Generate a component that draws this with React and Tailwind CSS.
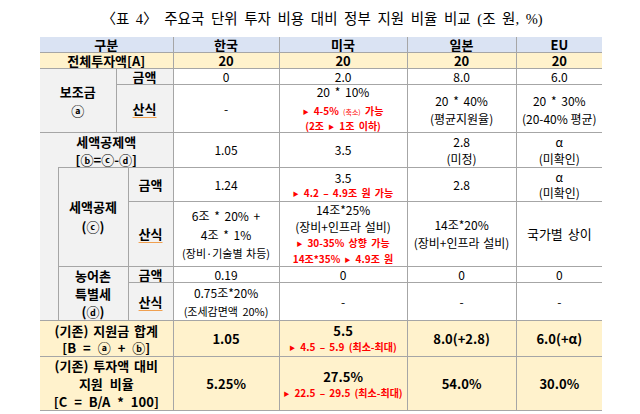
import React from 'react';

const cellBase = 'border border-[#a6a6a6] p-0 align-middle text-center';

// inner block with a fixed height so rows keep the reference pitch
const Box = ({ h, className = '', children }) => (
  <div className={`${h} flex flex-col items-center justify-center ${className}`}>{children}</div>
);

const Red = ({ children, className = '' }) => (
  <div className={`text-[10px] font-bold text-[#ff0000] leading-[13px] whitespace-nowrap ${className}`}>{children}</div>
);

const Tri = () => <span className="text-[6px] mr-[5px] align-[1px]">▶</span>;

const Label = ({ children, className = '' }) => (
  <div className={`text-[13px] font-bold whitespace-nowrap ${className}`}>{children}</div>
);

const Sansik = () => (
  <Label className="leading-[16px] underline decoration-[#f0a050] decoration-1 underline-offset-[3px]">산식</Label>
);

export default function App() {
  return (
    <div className="w-[640px] h-[414px] overflow-hidden bg-white text-black font-['Noto_Sans_CJK_KR',sans-serif]">
      <div className="h-[37px] flex items-center justify-center">
        <h1 className="text-[14.5px] leading-[20px] font-['Liberation_Serif','Noto_Sans_CJK_KR',serif] [word-spacing:3px] pl-[4px]">
          〈표 4〉 주요국 단위 투자 비용 대비 정부 지원 비율 비교 (조 원, %)
        </h1>
      </div>

      <table className="ml-[40px] w-[562px] table-fixed border-collapse text-[12px] [word-spacing:2px]">
        <colgroup>
          <col className="w-[18px]" />
          <col className="w-[58px]" />
          <col className="w-[12px]" />
          <col className="w-[45px]" />
          <col className="w-[106px]" />
          <col className="w-[128px]" />
          <col className="w-[109px]" />
          <col className="w-[86px]" />
        </colgroup>
        <tbody>
          {/* header */}
          <tr>
            <td colSpan={4} className={`${cellBase} border-t-0 border-l-0 bg-[#dae3f3]`}>
              <Box h="h-[15px]"><Label className="leading-[14px]">구분</Label></Box>
            </td>
            <td className={`${cellBase} border-t-0 bg-[#dae3f3]`}>
              <Box h="h-[15px]"><Label className="leading-[14px]">한국</Label></Box>
            </td>
            <td className={`${cellBase} border-t-0 bg-[#dae3f3]`}>
              <Box h="h-[15px]"><Label className="leading-[14px]">미국</Label></Box>
            </td>
            <td className={`${cellBase} border-t-0 bg-[#dae3f3]`}>
              <Box h="h-[15px]"><Label className="leading-[14px]">일본</Label></Box>
            </td>
            <td className={`${cellBase} border-t-0 border-r-0 bg-[#dae3f3]`}>
              <Box h="h-[15px]"><Label className="leading-[14px]">EU</Label></Box>
            </td>
          </tr>

          {/* total investment */}
          <tr>
            <td colSpan={4} className={`${cellBase} border-l-0 bg-[#fff2cc]`}>
              <Box h="h-[15px]"><Label className="leading-[14px]">전체투자액[A]</Label></Box>
            </td>
            {['20', '20', '20', '20'].map((v, i) => (
              <td key={i} className={`${cellBase} bg-[#fff2cc] ${i === 3 ? 'border-r-0' : ''}`}>
                <Box h="h-[15px]"><Label className="leading-[14px]">{v}</Label></Box>
              </td>
            ))}
          </tr>

          {/* subsidy */}
          <tr>
            <td colSpan={2} rowSpan={2} className={`${cellBase} border-l-0 bg-[#f2f2f2]`}>
              <Box h="h-[63px]" className="leading-[19px]">
                <Label>보조금</Label>
                <Label>ⓐ</Label>
              </Box>
            </td>
            <td colSpan={2} className={`${cellBase} bg-[#f2f2f2]`}>
              <Box h="h-[15px]"><Label className="leading-[14px]">금액</Label></Box>
            </td>
            {['0', '2.0', '8.0', '6.0'].map((v, i) => (
              <td key={i} className={`${cellBase} ${i === 3 ? 'border-r-0' : ''}`}>
                <Box h="h-[15px]" className="leading-[14px]">{v}</Box>
              </td>
            ))}
          </tr>
          <tr>
            <td colSpan={2} className={`${cellBase} bg-[#f2f2f2]`}>
              <Box h="h-[47px]"><Sansik /></Box>
            </td>
            <td className={cellBase}>
              <Box h="h-[47px]">-</Box>
            </td>
            <td className={cellBase}>
              <Box h="h-[47px]">
                <div className="leading-[16px] mb-[4px]">20 * 10%</div>
                <Red>
                  <Tri />4-5% <span className="text-[7px] font-normal">(축소)</span> 가능
                </Red>
                <Red>
                  (2조 <Tri />1조 이하)
                </Red>
              </Box>
            </td>
            <td className={cellBase}>
              <Box h="h-[47px]" className="leading-[18px] pt-[2px]">
                <div>20 * 40%</div>
                <div>(평균지원율)</div>
              </Box>
            </td>
            <td className={`${cellBase} border-r-0`}>
              <Box h="h-[47px]" className="leading-[18px] pt-[2px]">
                <div>20 * 30%</div>
                <div className="[word-spacing:0px]">(20-40% 평균)</div>
              </Box>
            </td>
          </tr>

          {/* tax credit total */}
          <tr>
            <td colSpan={4} className={`${cellBase} border-l-0 border-b-0 bg-[#f2f2f2]`}>
              <Box h="h-[34px]" className="leading-[18px] pt-[1px]">
                <Label>세액공제액</Label>
                <Label className="[word-spacing:0px]">[ⓑ=ⓒ-ⓓ]</Label>
              </Box>
            </td>
            <td className={cellBase}>
              <Box h="h-[34px]">1.05</Box>
            </td>
            <td className={cellBase}>
              <Box h="h-[34px]">3.5</Box>
            </td>
            <td className={cellBase}>
              <Box h="h-[34px]" className="leading-[17px]">
                <div>2.8</div>
                <div>(미정)</div>
              </Box>
            </td>
            <td className={`${cellBase} border-r-0`}>
              <Box h="h-[34px]" className="leading-[17px]">
                <div>α</div>
                <div>(미확인)</div>
              </Box>
            </td>
          </tr>

          {/* tax credit */}
          <tr>
            <td rowSpan={4} className={`${cellBase} border-l-0 border-t-0 bg-[#f2f2f2]`}>
              <Box h="h-[152px]" />
            </td>
            <td colSpan={2} rowSpan={2} className={`${cellBase} bg-[#f2f2f2]`}>
              <Box h="h-[98px]" className="leading-[20px]">
                <Label>세액공제</Label>
                <Label>(ⓒ)</Label>
              </Box>
            </td>
            <td className={`${cellBase} bg-[#f2f2f2]`}>
              <Box h="h-[33px]"><Label>금액</Label></Box>
            </td>
            <td className={cellBase}>
              <Box h="h-[33px]">1.24</Box>
            </td>
            <td className={cellBase}>
              <Box h="h-[33px]">
                <div className="leading-[17px]">3.5</div>
                <Red className="leading-[14px]">
                  <Tri />4.2 – 4.9조 원 가능
                </Red>
              </Box>
            </td>
            <td className={cellBase}>
              <Box h="h-[33px]">2.8</Box>
            </td>
            <td className={`${cellBase} border-r-0`}>
              <Box h="h-[33px]" className="leading-[16px]">
                <div>α</div>
                <div>(미확인)</div>
              </Box>
            </td>
          </tr>
          <tr>
            <td className={`${cellBase} bg-[#f2f2f2]`}>
              <Box h="h-[64px]"><Sansik /></Box>
            </td>
            <td className={cellBase}>
              <Box h="h-[64px]" className="leading-[19px]">
                <div>6조 * 20% +</div>
                <div>4조 * 1%</div>
                <div className="text-[11px] leading-[18px] [word-spacing:1px]">(장비·기술별 차등)</div>
              </Box>
            </td>
            <td className={cellBase}>
              <Box h="h-[64px]">
                <div className="leading-[16px]">14조*25%</div>
                <div className="leading-[17px] [word-spacing:1px]">(장비+인프라 설비)</div>
                <Red className="leading-[16px]">
                  <Tri />30-35% 상향 가능
                </Red>
                <Red className="leading-[14px]">
                  14조*35% <Tri />4.9조 원
                </Red>
              </Box>
            </td>
            <td className={cellBase}>
              <Box h="h-[64px]" className="leading-[18px]">
                <div>14조*20%</div>
                <div className="[word-spacing:1px]">(장비+인프라 설비)</div>
              </Box>
            </td>
            <td className={`${cellBase} border-r-0`}>
              <Box h="h-[64px]" className="text-[13px]">국가별 상이</Box>
            </td>
          </tr>

          {/* rural special tax */}
          <tr>
            <td colSpan={2} rowSpan={2} className={`${cellBase} bg-[#f2f2f2]`}>
              <Box h="h-[53px]" className="leading-[18px]">
                <Label>농어촌</Label>
                <Label>특별세</Label>
                <Label>(ⓓ)</Label>
              </Box>
            </td>
            <td className={`${cellBase} bg-[#f2f2f2]`}>
              <Box h="h-[15px]"><Label className="leading-[14px]">금액</Label></Box>
            </td>
            {['0.19', '0', '0', '0'].map((v, i) => (
              <td key={i} className={`${cellBase} ${i === 3 ? 'border-r-0' : ''}`}>
                <Box h="h-[15px]" className="leading-[14px]">{v}</Box>
              </td>
            ))}
          </tr>
          <tr>
            <td className={`${cellBase} bg-[#f2f2f2]`}>
              <Box h="h-[37px]"><Sansik /></Box>
            </td>
            <td className={cellBase}>
              <Box h="h-[37px]" className="leading-[18px]">
                <div>0.75조*20%</div>
                <div className="text-[11px]">(조세감면액 20%)</div>
              </Box>
            </td>
            {['-', '-', '-'].map((v, i) => (
              <td key={i} className={`${cellBase} ${i === 2 ? 'border-r-0' : ''}`}>
                <Box h="h-[37px]">{v}</Box>
              </td>
            ))}
          </tr>

          {/* total support */}
          <tr className="bg-[#fff2cc]">
            <td colSpan={4} className={`${cellBase} border-l-0`}>
              <Box h="h-[35px]" className="leading-[17px]">
                <Label>(기존) 지원금 합계</Label>
                <Label className="[word-spacing:4px]">[B = ⓐ + ⓑ]</Label>
              </Box>
            </td>
            <td className={cellBase}>
              <Box h="h-[35px]"><Label>1.05</Label></Box>
            </td>
            <td className={cellBase}>
              <Box h="h-[35px]">
                <Label className="leading-[18px]">5.5</Label>
                <Red className="leading-[14px]">
                  <Tri />4.5 – 5.9 (최소-최대)
                </Red>
              </Box>
            </td>
            <td className={cellBase}>
              <Box h="h-[35px]"><Label>8.0(+2.8)</Label></Box>
            </td>
            <td className={`${cellBase} border-r-0`}>
              <Box h="h-[35px]"><Label>6.0(+α)</Label></Box>
            </td>
          </tr>

          {/* support ratio */}
          <tr className="bg-[#fff2cc]">
            <td colSpan={4} className={`${cellBase} border-l-0`}>
              <Box h="h-[53px]" className="leading-[18px]">
                <Label>(기존) 투자액 대비</Label>
                <Label className="[word-spacing:4px]">지원 비율</Label>
                <Label className="[word-spacing:4px]">[C = B/A * 100]</Label>
              </Box>
            </td>
            <td className={cellBase}>
              <Box h="h-[53px]"><Label>5.25%</Label></Box>
            </td>
            <td className={cellBase}>
              <Box h="h-[53px]">
                <Label className="leading-[19px]">27.5%</Label>
                <Red className="leading-[14px]">
                  <Tri />22.5 – 29.5 (최소-최대)
                </Red>
              </Box>
            </td>
            <td className={cellBase}>
              <Box h="h-[53px]"><Label>54.0%</Label></Box>
            </td>
            <td className={`${cellBase} border-r-0`}>
              <Box h="h-[53px]"><Label>30.0%</Label></Box>
            </td>
          </tr>
        </tbody>
      </table>
    </div>
  );
}
